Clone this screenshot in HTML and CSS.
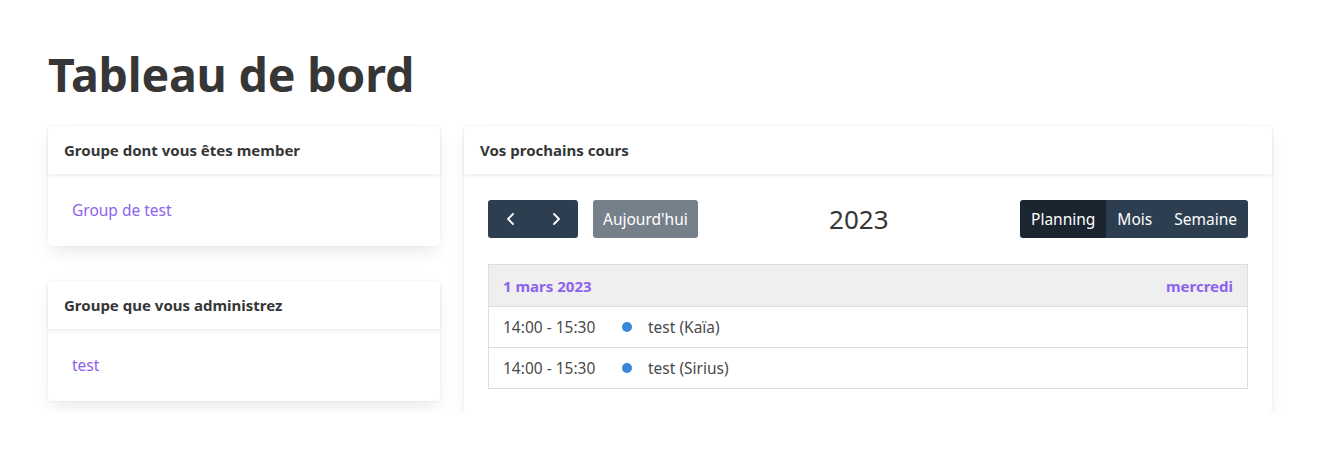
FILE: index.html
```html
<!DOCTYPE html>
<html lang="fr">
<head>
<meta charset="utf-8">
<title>Tableau de bord</title>
<link rel="stylesheet" href="styles.css">
</head>
<body>
<main class="container">
  <h1 class="title">Tableau de bord</h1>
  <div class="columns">
    <div class="col-left">
      <section class="card">
        <header class="card-header">Groupe dont vous êtes member</header>
        <div class="card-content"><a class="link" href="#">Group de test</a></div>
      </section>
      <section class="card">
        <header class="card-header">Groupe que vous administrez</header>
        <div class="card-content"><a class="link" href="#">test</a></div>
      </section>
    </div>
    <div class="col-right">
      <section class="card">
        <header class="card-header">Vos prochains cours</header>
        <div class="card-content">
          <div class="toolbar">
            <div class="tb-left">
              <div class="btn-group">
                <button class="btn btn-dark btn-icon" aria-label="précédent">
                  <svg width="16" height="16" viewBox="0 0 16 16"><path d="M10 3 L5 8 L10 13" fill="none" stroke="#fff" stroke-width="1.8" stroke-linecap="round" stroke-linejoin="round"/></svg>
                </button>
                <button class="btn btn-dark btn-icon" aria-label="suivant">
                  <svg width="16" height="16" viewBox="0 0 16 16"><path d="M6 3 L11 8 L6 13" fill="none" stroke="#fff" stroke-width="1.8" stroke-linecap="round" stroke-linejoin="round"/></svg>
                </button>
              </div>
              <button class="btn btn-muted">Aujourd'hui</button>
            </div>
            <h2 class="tb-title">2023</h2>
            <div class="tb-right">
              <div class="btn-group">
                <button class="btn btn-dark active">Planning</button>
                <button class="btn btn-dark">Mois</button>
                <button class="btn btn-dark">Semaine</button>
              </div>
            </div>
          </div>
          <div class="list">
            <div class="list-day">
              <span>1 mars 2023</span>
              <span>mercredi</span>
            </div>
            <div class="list-row">
              <span class="time">14:00 - 15:30</span>
              <span class="dot"></span>
              <span class="ev">test (Kaïa)</span>
            </div>
            <div class="list-row">
              <span class="time">14:00 - 15:30</span>
              <span class="dot"></span>
              <span class="ev">test (Sirius)</span>
            </div>
          </div>
        </div>
      </section>
    </div>
  </div>
</main>
</body>
</html>
```

FILE: styles.css
```css
* { box-sizing: border-box; }
html, body { margin: 0; padding: 0; background: #fff; }
body {
  font-family: "Noto Sans", "Open Sans", sans-serif;
  color: #4a4a4a;
  font-size: 16px;
}
.container {
  width: 1248px;
  margin-left: 36px;
  padding-top: 44px;
}
.title {
  margin: 0 12px 22px;
  font-size: 46.5px;
  font-weight: 700;
  line-height: 60px;
  color: #363636;
  letter-spacing: -0.2px;
}
.columns {
  display: flex;
  align-items: flex-start;
}
.col-left {
  width: 416px;
  padding: 0 12px;
  display: flex;
  flex-direction: column;
  gap: 35px;
}
.col-right {
  width: 832px;
  padding: 0 12px;
}
.card {
  background: #fff;
  border-radius: 4px;
  box-shadow: 0 8px 16px -4px rgba(10,10,10,0.1), 0 0 0 1px rgba(10,10,10,0.02);
}
.card-header {
  height: 48px;
  display: flex;
  align-items: center;
  padding: 0 16px;
  font-weight: 700;
  font-size: 15px;
  color: #363636;
  box-shadow: 0 2px 4px rgba(10,10,10,0.08);
}
.card-content {
  padding: 24px;
}
.link {
  display: block;
  line-height: 24px;
  color: #8d63ee;
  text-decoration: none;
  font-size: 15.5px;
}
.toolbar {
  display: flex;
  align-items: center;
  justify-content: space-between;
  height: 38px;
  margin-top: 2px;
  margin-bottom: 26px;
}
.tb-left { display: flex; align-items: center; gap: 15px; }
.tb-right { display: flex; }
.tb-title {
  margin: 0;
  font-weight: 400;
  font-size: 26px;
  color: #363636;
}
.btn-group { display: flex; }
.btn {
  border: none;
  height: 38px;
  font-family: inherit;
  font-size: 15.5px;
  color: #fff;
  padding: 0 11px;
  display: flex;
  align-items: center;
  justify-content: center;
  border-radius: 0;
}
.btn-group .btn.short { padding: 0 9px; }
.btn-dark { background: #2c3e50; }
.btn-dark.active { background: #1a252f; }
.btn-group .btn:first-child { border-radius: 3px 0 0 3px; }
.btn-group .btn:last-child { border-radius: 0 3px 3px 0; }
.btn-icon { width: 45px; padding: 0; }
.btn-muted {
  background: #76808b;
  border-radius: 3px;
  height: 38px;
  padding: 0 10px;
}
.list {
  border: 1px solid #ddd;
}
.list-day {
  height: 41px;
  background: #efefef;
  display: flex;
  align-items: center;
  justify-content: space-between;
  padding: 0 14px;
  font-weight: 700;
  font-size: 15px;
  color: #8d63ee;
}
.list-row {
  height: 41px;
  border-top: 1px solid #ddd;
  display: flex;
  align-items: center;
  padding: 0 14px;
  font-size: 15.5px;
  color: #4a4a4a;
}
.time { width: 119px; }
.dot {
  width: 10px;
  height: 10px;
  border-radius: 50%;
  background: #3788d8;
  margin-right: 16px;
}
```
